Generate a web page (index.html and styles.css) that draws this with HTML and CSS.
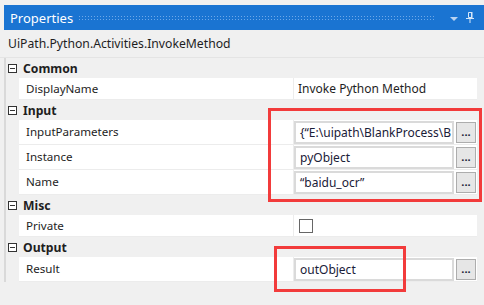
FILE: index.html
```html
<!DOCTYPE html>
<html lang="en">
<head>
    <meta charset="UTF-8">
    <title>Properties</title>
    <link rel="stylesheet" href="styles.css">
</head>
<body>
    <div class="panel">
        <div class="titlebar">
            <span class="title">Properties</span>
            <span class="grip"></span>
            <span class="menu-arrow"></span>
            <svg class="pin" width="8" height="11" viewBox="0 0 8 11">
                <path d="M2.5 0.5h3v5h-3z" fill="none" stroke="#d6e6f8" stroke-width="1"/>
                <rect x="5" y="0" width="1.5" height="6" fill="#d6e6f8"/>
                <rect x="0" y="6" width="8" height="1" fill="#d6e6f8"/>
                <rect x="3.5" y="7" width="1" height="4" fill="#d6e6f8"/>
            </svg>
        </div>

        <div class="typename">UiPath.Python.Activities.InvokeMethod</div>

        <div class="grid">
            <div class="cat"><span class="toggle"></span>Common</div>
            <div class="prop">
                <div class="name">DisplayName</div>
                <div class="value">Invoke Python Method</div>
            </div>

            <div class="cat"><span class="toggle"></span>Input</div>
            <div class="prop tall">
                <div class="name">InputParameters</div>
                <div class="value"><div class="box">{“E:\uipath\BlankProcess\B</div><button class="btn">...</button></div>
            </div>
            <div class="prop tall">
                <div class="name">Instance</div>
                <div class="value"><div class="box">pyObject</div><button class="btn">...</button></div>
            </div>
            <div class="prop tall">
                <div class="name">Name</div>
                <div class="value"><div class="box">“baidu_ocr”</div><button class="btn">...</button></div>
            </div>

            <div class="cat"><span class="toggle"></span>Misc</div>
            <div class="prop">
                <div class="name">Private</div>
                <div class="value"><span class="check"></span></div>
            </div>

            <div class="cat"><span class="toggle"></span>Output</div>
            <div class="prop tall">
                <div class="name">Result</div>
                <div class="value"><div class="box">outObject</div><button class="btn">...</button></div>
            </div>
        </div>

        <!-- red annotation frames drawn over the grid -->
        <div class="mark mark-input"></div>
        <div class="mark mark-output"></div>
    </div>
</body>
</html>
```

FILE: styles.css
```css
/* Page */
body {
    margin: 0;
    background: #f0f0f0;
    font-family: "Noto Sans", "Open Sans", sans-serif;
    font-size: 12px;
    color: #1e1e1e;
}

.panel {
    position: relative;
    width: 484px;
    height: 305px;
    padding-top: 5px;
    box-sizing: border-box;
    overflow: hidden;
}

/* Title bar */
.titlebar {
    display: flex;
    align-items: center;
    height: 25px;
    margin-left: 4px;
    padding-left: 6px;
    background: #1a74d2;
    color: #fff;
}

.title {
    font-size: 13px;
    width: 68px;
}

.grip {
    width: 357px;
    height: 5px;
    background-image: radial-gradient(circle, #6ea8e8 0.6px, transparent 0.9px);
    background-size: 3px 3px;
}

.menu-arrow {
    margin-left: 15px;
    width: 0;
    height: 0;
    border-left: 4px solid transparent;
    border-right: 4px solid transparent;
    border-top: 4px solid #b9d3f1;
    margin-top: 3px;
}

.pin {
    margin-left: 8px;
}

/* Type name line */
.typename {
    height: 27px;
    line-height: 27px;
    padding-left: 8px;
    font-size: 12.2px;
    border-bottom: 1px solid #e4e4e4;
}

/* Property grid */
.grid {
    margin-left: 4px;
    border-left: 2px solid #d9d9d9;
    padding-right: 7px;
}

.cat {
    display: flex;
    align-items: center;
    height: 20px;
    font-weight: bold;
    font-size: 12.2px;
}

.toggle {
    position: relative;
    width: 7px;
    height: 7px;
    margin: 0 6px 0 2px;
    border: 1px solid #333;
    background: #fff;
}

.toggle::after {
    content: "";
    position: absolute;
    left: 1px;
    top: 3px;
    width: 5px;
    height: 1px;
    background: #333;
}

.prop {
    display: flex;
    height: 21px;
    margin-left: 13px;
    background: #fff;
    border-bottom: 1px solid #ececec;
}

.prop.tall {
    height: 24px;
}

.name {
    width: 267px;
    padding-left: 7px;
    line-height: 21px;
    font-size: 11.6px;
}

.tall .name {
    line-height: 24px;
}

.value {
    flex: 1;
    display: flex;
    align-items: center;
    border-left: 1px solid #ececec;
    padding-left: 4px;
    font-size: 12px;
}

.tall .value {
    padding-left: 0;
}

.box {
    width: 148px;
    height: 19px;
    line-height: 19px;
    padding: 0 4px;
    border: 2px solid #dadada;
    overflow: hidden;
    white-space: nowrap;
    color: #1a2038;
}

.btn {
    width: 20px;
    height: 21px;
    margin-left: 2px;
    padding: 0;
    border: 1px solid #adadad;
    background: #e6e6e6;
    font-family: inherit;
    font-size: 11px;
    font-weight: bold;
    line-height: 14px;
    color: #1a2038;
}

.check {
    width: 12px;
    height: 12px;
    margin-left: 1px;
    border: 1px solid #666;
    background: #fff;
}

/* Annotation frames */
.mark {
    position: absolute;
    border: 3px solid #f23b3b;
}

.mark-input {
    left: 268px;
    top: 108px;
    width: 208px;
    height: 88px;
}

.mark-output {
    left: 274px;
    top: 246px;
    width: 126px;
    height: 40px;
}
```
